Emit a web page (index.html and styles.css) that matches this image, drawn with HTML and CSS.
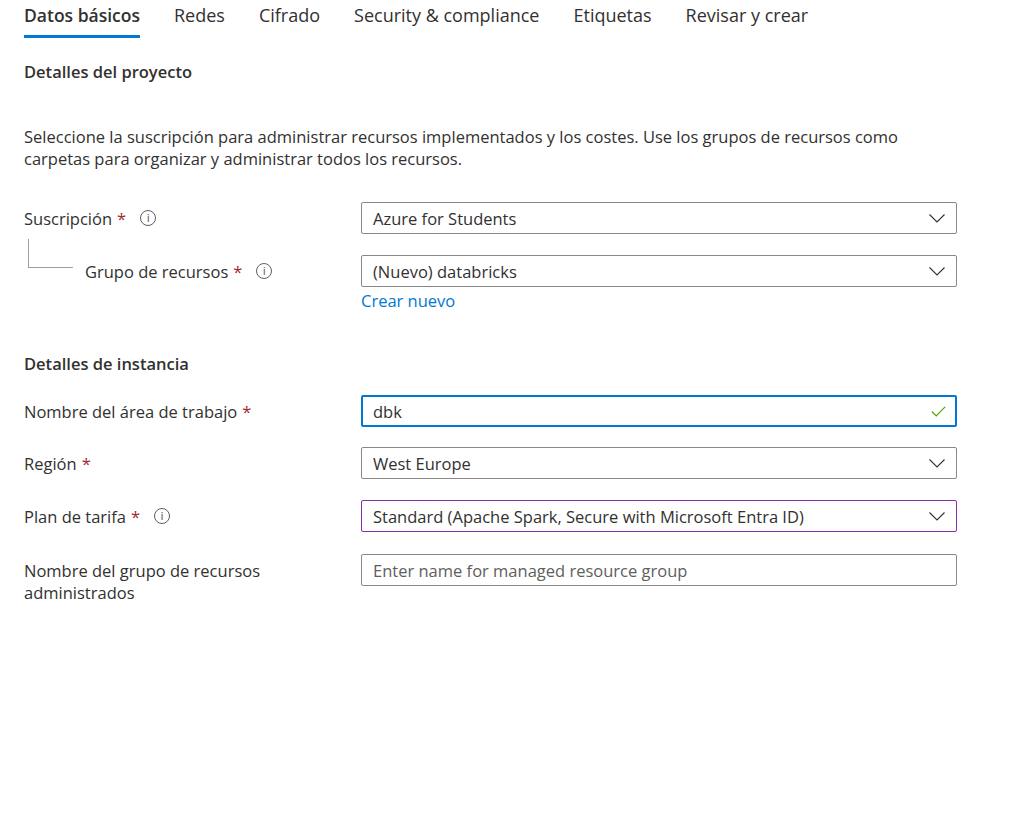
FILE: index.html
```html
<!DOCTYPE html>
<html lang="es">
<head>
<meta charset="utf-8">
<title>Crear área de trabajo</title>
<link rel="stylesheet" href="styles.css">
</head>
<body>
<div class="page">
  <nav class="tabs">
    <div class="tab active">Datos básicos</div>
    <div class="tab">Redes</div>
    <div class="tab">Cifrado</div>
    <div class="tab">Security &amp; compliance</div>
    <div class="tab">Etiquetas</div>
    <div class="tab">Revisar y crear</div>
  </nav>

  <h2 class="section-title first">Detalles del proyecto</h2>
  <p class="intro">Seleccione la suscripción para administrar recursos implementados y los costes. Use los grupos de recursos como carpetas para organizar y administrar todos los recursos.</p>

  <div class="row">
    <div class="label">Suscripción <span class="req">*</span><span class="info">i</span></div>
    <div class="field"><div class="select">Azure for Students<svg class="chev" viewBox="0 0 16 9"><path d="M0.5 0.5 L8 8 L15.5 0.5" fill="none" stroke="#323130" stroke-width="1.1"/></svg></div></div>
  </div>

  <div class="row child">
    <div class="label"><span class="tree"></span>Grupo de recursos <span class="req">*</span><span class="info">i</span></div>
    <div class="field">
      <div class="select">(Nuevo) databricks<svg class="chev" viewBox="0 0 16 9"><path d="M0.5 0.5 L8 8 L15.5 0.5" fill="none" stroke="#323130" stroke-width="1.1"/></svg></div>
      <a class="link">Crear nuevo</a>
    </div>
  </div>

  <h2 class="section-title second">Detalles de instancia</h2>

  <div class="row tight">
    <div class="label">Nombre del área de trabajo <span class="req">*</span></div>
    <div class="field"><div class="select focused">dbk<svg class="check" viewBox="0 0 16 12"><path d="M0.8 6 L5.5 10.7 L15.2 1" fill="none" stroke="#57a300" stroke-width="1.3"/></svg></div></div>
  </div>

  <div class="row">
    <div class="label">Región <span class="req">*</span></div>
    <div class="field"><div class="select">West Europe<svg class="chev" viewBox="0 0 16 9"><path d="M0.5 0.5 L8 8 L15.5 0.5" fill="none" stroke="#323130" stroke-width="1.1"/></svg></div></div>
  </div>

  <div class="row wide">
    <div class="label">Plan de tarifa <span class="req">*</span><span class="info">i</span></div>
    <div class="field"><div class="select purple">Standard (Apache Spark, Secure with Microsoft Entra ID)<svg class="chev" viewBox="0 0 16 9"><path d="M0.5 0.5 L8 8 L15.5 0.5" fill="none" stroke="#323130" stroke-width="1.1"/></svg></div></div>
  </div>

  <div class="row last">
    <div class="label multi">Nombre del grupo de recursos administrados</div>
    <div class="field"><div class="select placeholder">Enter name for managed resource group</div></div>
  </div>
</div>
</body>
</html>
```

FILE: styles.css
```css
html, body {
  margin: 0;
  padding: 0;
  background: #ffffff;
}

body {
  font-family: "Open Sans", "Noto Sans", sans-serif;
  color: #323130;
  font-size: 16.5px;
}

.page {
  padding-left: 24px;
  width: 933px;
}

.tabs {
  display: flex;
  height: 38px;
}

.tab {
  font-size: 18px;
  line-height: 31px;
  margin-right: 34px;
  white-space: nowrap;
  color: #323130;
}

.tab.active {
  font-size: 17.5px;
  font-weight: 600;
  border-bottom: 3px solid #0078d4;
  height: 35px;
}

.section-title {
  font-size: 16.5px;
  font-weight: 600;
  margin: 0;
  line-height: 22px;
}

.section-title.first {
  margin-top: 23px;
}

.section-title.second {
  margin-top: 39px;
  margin-bottom: 20px;
}

.intro {
  margin: 43px 0 32px;
  line-height: 22px;
}

.row {
  display: flex;
  margin-bottom: 21px;
}

.row.tight {
  margin-bottom: 20px;
}

.row.wide {
  margin-bottom: 22px;
}

.row.child {
  margin-bottom: 0;
}

.label {
  width: 337px;
  flex: none;
  display: flex;
  align-items: center;
  height: 32px;
  position: relative;
  white-space: nowrap;
}

.row.child .label {
  padding-left: 61px;
  box-sizing: border-box;
}

.tree {
  position: absolute;
  left: 4px;
  top: -16px;
  width: 44px;
  height: 28px;
  border-left: 1px solid #a19f9d;
  border-bottom: 1px solid #a19f9d;
}

.label.multi {
  white-space: normal;
  align-items: flex-start;
  height: auto;
  line-height: 22px;
  padding-top: 6px;
  width: 337px;
  padding-right: 80px;
  box-sizing: border-box;
}

.req {
  color: #a4262c;
  margin-left: 5px;
}

.info {
  display: inline-flex;
  align-items: center;
  justify-content: center;
  width: 14px;
  height: 14px;
  border: 1px solid #605e5c;
  border-radius: 50%;
  font-size: 11px;
  line-height: 1;
  color: #605e5c;
  margin-left: 14px;
  font-family: "DejaVu Sans", sans-serif;
}

.field {
  width: 596px;
  flex: none;
}

.select {
  height: 32px;
  box-sizing: border-box;
  border: 1px solid #8a8886;
  border-radius: 2px;
  display: flex;
  align-items: center;
  padding-left: 11px;
  padding-right: 11px;
  position: relative;
  white-space: nowrap;
}

.select.focused {
  border: 2px solid #0078d4;
  padding-left: 10px;
  padding-right: 9px;
}

.select.purple {
  border-color: #8a2da5;
}

.select.placeholder {
  color: #605e5c;
}

.chev {
  width: 16px;
  height: 9px;
  margin-left: auto;
  margin-right: 0;
}

.check {
  width: 15px;
  height: 11px;
  margin-left: auto;
}

.link {
  display: block;
  color: #0078d4;
  line-height: 26px;
  margin-top: 1px;
}
```
